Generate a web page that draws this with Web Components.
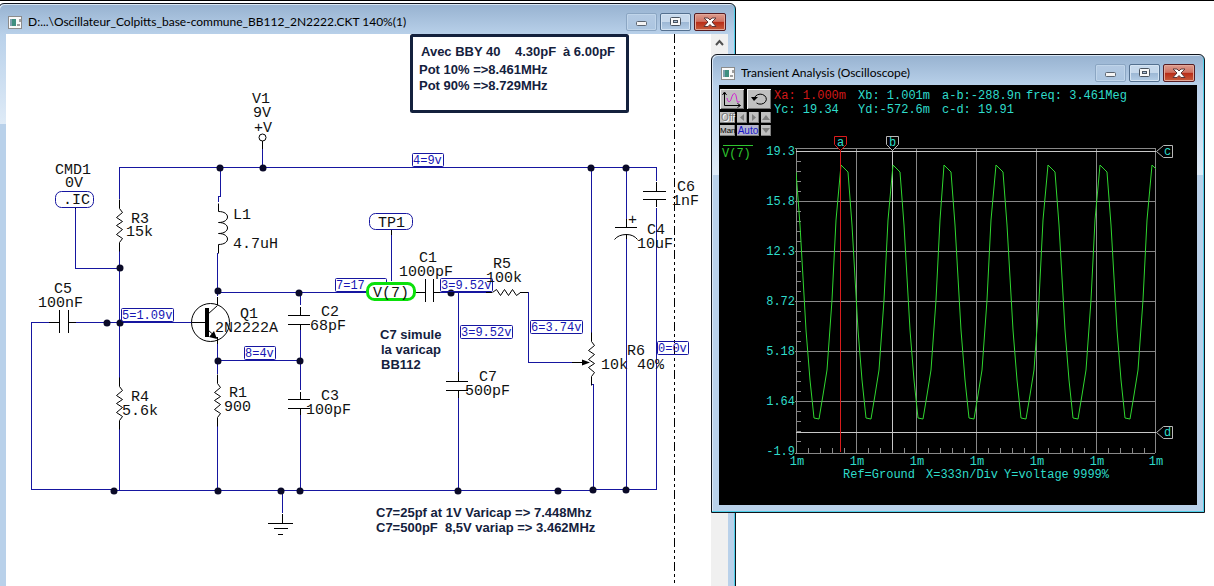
<!DOCTYPE html>
<html lang="fr">
<head>
<meta charset="utf-8">
<title>Oscillateur Colpitts</title>
<style>
html, body { margin: 0; height: 100%; background: #fff; }
body { overflow: hidden; font-family: Lato, "Open Sans", sans-serif; }
</style>
</head>
<body>
<desk-top>
  <mdi-window class="sheet" caption="D:...\Oscillateur_Colpitts_base-commune_BB112_2N2222.CKT 140%(1)">
    <circuit-sheet></circuit-sheet>
  </mdi-window>
  <mdi-window class="scope" caption="Transient Analysis (Oscilloscope)">
    <scope-panel></scope-panel>
  </mdi-window>
</desk-top>
<script>
const attach = (el, html) => { el.attachShadow({ mode: 'open' }).innerHTML = html; };

customElements.define('desk-top', class extends HTMLElement {
  constructor() {
    super();
    attach(this, `<style>
      :host { display: block; position: relative; height: 100%; overflow: hidden; border-top: 1px solid #000; box-sizing: border-box; }
      ::slotted(.sheet) { position: absolute; left: -2px; top: 2px; bottom: -12px; width: calc(100% - 476px); }
      ::slotted(.scope) { position: absolute; left: 711px; top: 53px; right: 9px; }
    </style><slot></slot>`);
  }
});

customElements.define('caption-button', class extends HTMLElement {
  connectedCallback() {
    const kind = this.getAttribute('kind');
    const art = {
      minimize: '<rect x="10.500" y="7.500" width="10" height="4" rx="1" fill="#f4f4f4" stroke="#5a6470"/>',
      maximize: '<rect x="10.500" y="3.500" width="10" height="8" rx="1" fill="#f8f8f8" stroke="#4a5460"/><rect x="13.500" y="6.500" width="4" height="2" fill="#a9c0d8" stroke="#4a5460"/>',
      close: '<path d="M10 4h4l2 2 2-2h4l-4 4 4 4.500h-4l-2-2-2 2h-4l4-4.500z" fill="#fff" stroke="#5c3a3a"/>'
    }[kind];
    attach(this, `<style>
      :host { display: block; }
      button { display: block; width: 31px; height: 18px; padding: 0; border: 1px solid #54708f; border-radius: 2px;
        background: linear-gradient(#c7d9ec 0 48%, #9db8d5 52%, #b4cde6); box-shadow: inset 0 0 0 1px #d5e4f3; }
      button.minimize { border-color: #8ba6c3; background: linear-gradient(#b4cae3, #abc5e0); box-shadow: inset 0 0 0 1px #c0d5ea; }
      button.close { width: 32px; border-color: #561c22; background: linear-gradient(#dd9c8f 0, #cf7363 46%, #b92d18 52%, #c65c3c); box-shadow: inset 0 0 0 1px #e3a898; }
      svg { display: block; width: 30px; height: 16px; }
    </style><button class="${kind}" aria-label="${kind}"><svg viewBox="1 0 30 16">${art}</svg></button>`);
  }
});

customElements.define('mdi-window', class extends HTMLElement {
  connectedCallback() {
    attach(this, `<style>
      :host { display: flex; flex-direction: column; box-sizing: border-box; padding: 0 7px 7px; border: 1px solid #10141c;
        border-radius: 6px 6px 0 0;
        background: linear-gradient(#97b2d0 0, #b9d1ea 31px, #dfebf7 120px, #b9d1ea 120px);
        box-shadow: inset -1px -1px 0 #4fd0ea, inset 1px 1px 0 #dbe8f5; }
      header { display: flex; align-items: center; height: 18px; padding: 9px 2px 3px 2px; gap: 3px; }
      header svg { flex: none; width: 14px; height: 13px; }
      h2 { flex: 1; margin: 0 0 0 3px; font-size: 12px; font-weight: 400; line-height: 18px; color: #000; white-space: nowrap; overflow: hidden; }
      main { flex: 1; min-height: 0; overflow: hidden; }
    </style>
    <header>
      <svg viewBox="0 0 14 13"><rect width="14" height="13" fill="#8c8c8c"/><rect x="1" y="1" width="12" height="11" fill="#fafafa"/><rect x="2" y="3" width="6" height="7" fill="#3f8f80"/><rect x="2" y="3" width="2" height="7" fill="#7f9fb0"/><path d="M12 3v3M9 9h3" stroke="#444"/></svg>
      <h2></h2>
      <caption-button kind="minimize"></caption-button>
      <caption-button kind="maximize"></caption-button>
      <caption-button kind="close"></caption-button>
    </header>
    <main><slot></slot></main>`);
    this.shadowRoot.querySelector('h2').textContent = this.getAttribute('caption');
  }
});

/* ---- schematic ---- */
const wires = [
  'M120 200V168H657V182', 'M120 250V380M120 430V491', 'M76 210V269H120', 'M50 323H32V490H115V491H594V490H657V209',
  'M77 323H193', 'M263 150V168', 'M221 168V197H219V203', 'M219 254H218V297M218 293H368', 'M301 293V306M301 331V391M301 416V491',
  'M218 345V375M218 427V491M218 361H301', 'M392 236V282', 'M440 293H487M450 292H487', 'M459 293V373M459 399V491', 'M529 293V363H573',
  'M592 168V335M592 385H594V491', 'M627 168V220M627 240V490', 'M283 491V514'
];
const zig = (x, y, h) => {
  const s = h / 8; let d = `M${x} ${y - 9}V${y}`;
  [3, -3, 3, -3, 3, -3, 3].forEach((o, i) => { d += `L${x + o} ${y + Math.round(s * (i + 1))}`; });
  return d + `L${x} ${y + h}V${y + h + 9}`;
};
const parts = [
  'M487 293H493M521 293H529',
  'M50 323H60M60 311V334M69 311V334M69 323H77', 'M263 141V150', 'M301 308V316M289 316H311M289 325H311M301 325V331',
  'M301 393V400M289 400H311M289 409H311M301 409V416', 'M416 293H426M426 280V303M434 280V303M434 293H441',
  'M459 373V382M447 382H469M447 391H469M459 391V399', 'M657 183V192M644 192H667M644 200H667M657 200V208',
  'M627 220V228M616 228H638M627 235V240', 'M283 515V524M269 524H294M275 529H289M279 535H284',
  'M392 230V236M76 207V210M573 363H585', 'M193 323H206M218 298V306M218 338V345'
];
const curves = [
  zig(120, 209, 34), zig(120, 387, 34), zig(218, 384, 34), zig(592, 342, 35),
  'M493 293L497 290L501 296L505 290L509 296L513 290L517 296L521 293',
  'M219 204V212C231 212 231 223 219 223C231 223 231 234 219 234C231 234 231 245 219 245V254',
  'M615 240Q619 235 627 235Q634 235 638 240', 'M208 315L218 306M208 330L218 339'
];
const dots = [[120,268],[107,323],[120,323],[220,168],[263,168],[218,291],[299,293],[451,293],[591,168],[626,168],[218,361],[300,361],
  [114,491],[218,491],[281,491],[300,491],[458,491],[558,491],[593,490],[626,490]];
const labels = [[252,103,'V1'],[253,117,'9V'],[254,132,'+V'],[55,174,'CMD1'],[65,187,'0V'],[63,204,'.IC'],[131,223,'R3'],[126,236,'15k'],
  [54,293,'C5'],[38,307,'100nF'],[233,219,'L1'],[233,248,'4.7uH'],[240,318,'Q1'],[215,332,'2N2222A'],[321,316,'C2'],[310,330,'68pF'],
  [378,227,'TP1'],[373,297,'V(7)'],[419,262,'C1'],[399,276,'1000pF'],[493,268,'R5'],[486,282,'100k'],[479,381,'C7'],[465,395,'500pF'],
  [628,224,'+'],[647,234,'C4'],[637,248,'10uF'],[677,191,'C6'],[672,205,'1nF'],[627,355,'R6'],[601,369,'10k'],[637,369,'40%'],
  [131,401,'R4'],[122,415,'5.6k'],[229,397,'R1'],[224,411,'900'],[321,400,'C3'],[306,414,'100pF']];
const nodes = [[412,153,32,'4=9v'],[121,308,53,'5=1.09v'],[335,278,52,'7=17'],[440,278,53,'3=9.52v'],[460,325,53,'3=9.52v'],
  [530,320,53,'6=3.74v'],[657,341,32,'0=0v'],[244,346,32,'8=4v']];
const notes = [[421,56,'Avec BBY 40'],[515,56,'4.30pF'],[563,56,'à 6.00pF'],[419,74,'Pot 10% =>8.461MHz'],[419,90,'Pot 90% =>8.729MHz'],
  [380,339,'C7 simule'],[381,354,'la varicap'],[381,369,'BB112'],[376,517,'C7=25pf at 1V Varicap => 7.448Mhz'],
  [376,532,'C7=500pF'],[445,532,'8,5V variap => 3.462MHz']];
const esc = s => s.replace(/>/g, '&gt;');
const texts = (list, cls) => list.map(([x, y, t]) => `<text class="${cls}" x="${x}" y="${y}">${esc(t)}</text>`).join('');

customElements.define('circuit-sheet', class extends HTMLElement {
  constructor() {
    super();
    attach(this, `<style>
      :host { display: flex; height: 100%; background: #fff; }
      .paper { flex: 1; min-width: 0; overflow: hidden; }
      .paper svg { display: block; width: 100%; }
      .bar { flex: none; width: 17px; background: #f0f0f0; }
      .bar button { display: block; width: 17px; height: 17px; padding: 0; border: 0; background: none; }
      .bar svg { display: block; width: 17px; height: 17px; }
      .crisp { shape-rendering: crispEdges; fill: none; }
      .wire { stroke: #1616a0; } .part { stroke: #000; }
      .lbl { font: 15px "Liberation Mono", monospace; fill: #111; }
      .node { font: 12px "Liberation Mono", monospace; fill: #1616b4; }
      .note { font: bold 13px "Liberation Sans", sans-serif; fill: #14213d; }
    </style>
    <div class="paper"><svg viewBox="6 34 705 560" role="img" aria-label="Oscillateur Colpitts">
      <g transform="translate(-1 -1)">
        <path class="crisp part" d="M675 35V595" stroke-dasharray="9 3 3 3 3 3"/>
        <g class="crisp wire">${wires.map(d => `<path d="${d}"/>`).join('')}</g>
        <g class="crisp part">${parts.map(d => `<path d="${d}"/>`).join('')}</g>
      </g>
      <g fill="none" stroke="#000"><g transform="translate(-.5 -.5)">${curves.map(d => `<path d="${d}"/>`).join('')}</g>
        <circle cx="262.500" cy="137.500" r="3.500" fill="#fff"/><circle cx="210.500" cy="322.500" r="19"/></g>
      <rect x="205" y="308" width="4" height="29"/><path d="M217 339l-8-2 5-6zM590 362.500l-8-3v6z"/>
      <g fill="#0a0a28">${dots.map(([x, y]) => `<circle cx="${x}" cy="${y}" r="3.500"/>`).join('')}</g>
      <g fill="#fff" stroke="#1616a0"><rect x="55.500" y="191.500" width="38" height="16" rx="6"/><rect x="369.500" y="213.500" width="43" height="16" rx="6"/></g>
      ${nodes.map(([x, y, w]) => `<rect x="${x + .5}" y="${y + .5}" width="${w - 1}" height="13" rx="1" fill="none" stroke="#1616a0"/>`).join('')}
      <rect x="367.500" y="283.500" width="47" height="16" rx="7" fill="#fff" stroke="#0be00b" stroke-width="3"/>
      <rect x="411.500" y="35.500" width="216" height="76" rx="1" fill="#fff" stroke="#14213d" stroke-width="3"/>
      ${texts(nodes.map(([x, y, w, t]) => [x + 1, y + 11, t]), 'node')}${texts(labels, 'lbl')}${texts(notes, 'note')}
    </svg></div>
    <div class="bar"><button aria-label="Défiler vers le haut"><svg viewBox="0 0 17 17"><path d="M5 11l3.500-4 3.500 4" fill="none" stroke="#505050" stroke-width="2"/></svg></button></div>`);
  }
});

/* ---- oscilloscope ---- */
const period = [[0,165],[7,172],[11,225],[17,330],[21,380],[25,418],[30,419],[34,395],[38,370],[43,300],[47,220]];
const wave = [];
for (let n = 0; n < 8; n++) period.forEach(([x, y]) => wave.push(`${789 + Math.round(n * 51.8) + x},${y}`));
const gridX = [797, 857, 917, 977, 1037, 1097, 1156];
const gridY = [[149,155,'19.3'],[202,205,'15.8'],[252,255,'12.3'],[302,305,'8.72'],[352,355,'5.18'],[402,405,'1.64'],[454,455,'-1.9']];
let ticks = '';
for (let y = 162; y < 450; y += 10) ticks += `M797 ${y}h5`;
for (let x = 809; x < 1156; x += 12) ticks += `M${x} 454v-5`;

customElements.define('scope-panel', class extends HTMLElement {
  constructor() {
    super();
    attach(this, `<style>
      :host { display: block; background: #000; color: #2fdccb; font: 12px/14px "Liberation Mono", monospace; }
      header { display: flex; height: 51px; gap: 3px; }
      .tools { flex: none; width: 51px; padding: 4px 0 0 1px; display: flex; flex-direction: column; gap: 2px; }
      .row { display: flex; gap: 2px; }
      .row.big { gap: 3px; padding-bottom: 1px; }
      button { height: 11px; width: 10px; padding: 0; border: 0; background: #c0c0c0; color: #000; box-shadow: inset -1px -1px 0 #808080;
        font: 10px/11px "Liberation Sans", sans-serif; }
      .big button { width: 24px; height: 20px; box-shadow: inset 1px 1px 0 #f4f4f4, inset -1px -1px 0 #707070; }
      .wide { width: 15px; font-size: 8px; } .auto { width: 22px; font-size: 10px; color: #1414c8; background: #b4b4cc; }
      .off { font-size: 10px; color: #777; text-shadow: 1px 1px 0 #fff; }
      button svg { display: block; width: 100%; height: 100%; }
      dl { display: grid; grid-template-columns: 84px 84px 84px auto; grid-auto-rows: 14px; align-content: start; margin: 0; padding-top: 4px; white-space: pre; }
      dl div { display: flex; } dt, dd { margin: 0; } .red { color: #d01818; }
      .plot { display: block; width: 100%; }
      .plot text { fill: #2fdccb; }
      .crisp { shape-rendering: crispEdges; fill: none; }
    </style>
    <header>
      <div class="tools">
        <div class="row big">
          <button aria-label="Trace"><svg viewBox="0 0 24 20" fill="none"><path d="M4.500 4v12.500H20M2.500 6l2-3 2 3M17.500 14.500l3 2-3 2" stroke="#000"/><path d="M7 9c1 5 3 5 4.500 0s4-7 5 0 2 4 3 3" stroke="#d020d0"/></svg></button>
          <button aria-label="Reset"><svg viewBox="0 0 24 20" fill="none"><path d="M7.500 9a6 5 0 1 1 2 5" stroke="#000"/><path d="M4 8h7l-4 4z" fill="#000"/></svg></button>
        </div>
        <div class="row"><button class="wide off">Off</button>
          <button aria-label="Left"><svg viewBox="0 0 10 11"><path d="M7 2v7L3 5.500z" fill="#808080"/></svg></button>
          <button aria-label="Right"><svg viewBox="0 0 10 11"><path d="M3 2v7l4-3.500z" fill="#808080"/></svg></button>
          <button aria-label="Up"><svg viewBox="0 0 10 11"><path d="M1 8h8L5 3z" fill="#808080"/></svg></button></div>
        <div class="row"><button class="wide">Man</button><button class="auto">Auto</button>
          <button aria-label="Down"><svg viewBox="0 0 10 11"><path d="M1 3h8L5 8z" fill="#808080"/></svg></button></div>
      </div>
      <dl>
        <div class="red"><dt>Xa: </dt><dd>1.000m</dd></div><div><dt>Xb: </dt><dd>1.001m</dd></div><div><dt>a-b:</dt><dd>-288.9n</dd></div><div><dt>freq: </dt><dd>3.461Meg</dd></div>
        <div><dt>Yc: </dt><dd>19.34</dd></div><div><dt>Yd:</dt><dd>-572.6m</dd></div><div><dt>c-d: </dt><dd>19.91</dd></div>
      </dl>
    </header>
    <svg class="plot" viewBox="719 136 478 369" role="img" aria-label="V(7)">
      <defs><clipPath id="area"><rect x="796" y="148" width="360" height="306"/></clipPath></defs>
      <g transform="translate(-1 -1)">
        <g class="crisp" stroke="#888">${gridX.map(x => `<path d="M${x} 149V454"/>`).join('')}${gridY.map(([y]) => `<path d="M796 ${y}H1156"/>`).join('')}<path d="${ticks}"/></g>
        <g class="crisp" stroke="#c8c8c8"><path d="M797 152H1157M797 433H1157M893 151V451"/></g>
      </g>
      <polyline clip-path="url(#area)" fill="none" stroke="#2fd62f" points="${wave.join(' ')}"/>
      <rect x="840" y="151" width="1" height="301" fill="#d81c1c"/>
      <g fill="#000" stroke="#b8b8b8"><path d="M834.500 136.500h12v8l-6 6-6-6z" stroke="#d81c1c"/><path d="M886.500 136.500h12v8l-6 6-6-6z"/>
        <path d="M1156.500 151.500l7-6h9v12h-9z"/><path d="M1156.500 432.500l7-6h9v12h-9z"/></g>
      <text x="837" y="146">a</text><text x="889" y="146">b</text><text x="1164" y="155">c</text><text x="1164" y="436">d</text>
      <path class="crisp" d="M723 145H753" stroke="#2fc62f"/><text x="722" y="157" style="fill:#2fc62f">V(7)</text>
      <g text-anchor="end">${gridY.map(([, y, t]) => `<text x="795" y="${y}">${t}</text>`).join('')}</g>
      <g text-anchor="middle">${gridX.map(x => `<text x="${x}" y="465">1m</text>`).join('')}</g>
      <text x="843" y="478">Ref=Ground</text><text x="926" y="478">X=333n/Div</text><text x="1004" y="478">Y=voltage</text><text x="1073" y="478">9999%</text>
    </svg>`);
  }
});
</script>
</body>
</html>
